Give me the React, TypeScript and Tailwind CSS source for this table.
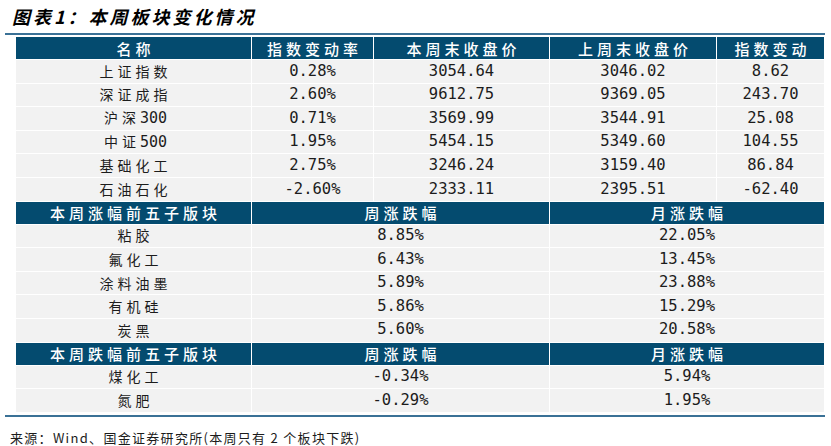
import React from 'react';

const cjk = '[font-family:"Noto_Sans_CJK_SC",sans-serif]';
const mono = '[font-family:"DejaVu_Sans_Mono","Noto_Sans_CJK_SC",monospace]';

type Cell = string;

const indexRows: Cell[][] = [
  ['上证指数', '0.28%', '3054.64', '3046.02', '8.62'],
  ['深证成指', '2.60%', '9612.75', '9369.05', '243.70'],
  ['沪深|300', '0.71%', '3569.99', '3544.91', '25.08'],
  ['中证|500', '1.95%', '5454.15', '5349.60', '104.55'],
  ['基础化工', '2.75%', '3246.24', '3159.40', '86.84'],
  ['石油石化', '-2.60%', '2333.11', '2395.51', '-62.40'],
];

const topRows: Cell[][] = [
  ['粘胶', '8.85%', '22.05%'],
  ['氟化工', '6.43%', '13.45%'],
  ['涂料油墨', '5.89%', '23.88%'],
  ['有机硅', '5.86%', '15.29%'],
  ['炭黑', '5.60%', '20.58%'],
];

const bottomRows: Cell[][] = [
  ['煤化工', '-0.34%', '5.94%'],
  ['氮肥', '-0.29%', '1.95%'],
];

const cols5 = 'grid-cols-[235px_121px_175px_166px_107px]';
const cols3 = 'grid-cols-[235px_297px_274px]';

const HeadCell: React.FC<{ text: string }> = ({ text }) => (
  <div className="bg-[#044b6f] text-white flex items-center justify-center h-[22px]">
    <span className={`${cjk} text-[15px] font-medium tracking-[4px] pl-[4px] leading-none`}>{text}</span>
  </div>
);

const NameText: React.FC<{ text: string }> = ({ text }) => {
  const [zh, num] = text.split('|');
  return (
    <span className="leading-none text-[14px]">
      <span className={`${cjk} tracking-[4px] pl-[4px]`}>{zh}</span>
      {num && <span className={`${mono} text-[15px]`}>{num}</span>}
    </span>
  );
};

const DataCell: React.FC<{ text: string; name?: boolean }> = ({ text, name }) => (
  <div className="bg-[#f2f2f2] text-[#1c1c1c] flex items-center justify-center h-[22.6px]">
    {name ? <NameText text={text} /> : <span className={`${mono} text-[15.5px] leading-none`}>{text}</span>}
  </div>
);

const Section: React.FC<{ cols: string; head: string[]; rows: Cell[][] }> = ({ cols, head, rows }) => (
  <div className={`grid ${cols} gap-px`}>
    {head.map((h) => (
      <HeadCell key={h} text={h} />
    ))}
    {rows.map((r) => r.map((c, i) => <DataCell key={r[0] + i} text={c} name={i === 0} />))}
  </div>
);

const App: React.FC = () => {
  return (
    <div className="w-[831px] h-[446px] bg-white relative overflow-hidden">
      <div className="pl-[12px] pt-[3px] h-[33px]">
        <h1 className={`${cjk} text-[18px] font-bold italic tracking-[3px] text-black leading-[26px]`}>
          图表1：本周板块变化情况
        </h1>
      </div>
      <div className="ml-[5px] w-[820px] h-[2px] bg-[#3a7196]" />
      <div className="ml-[16px] w-[808px] mt-[2px] bg-white flex flex-col gap-px">
        <Section cols={cols5} head={['名称', '指数变动率', '本周末收盘价', '上周末收盘价', '指数变动']} rows={indexRows} />
        <Section cols={cols3} head={['本周涨幅前五子版块', '周涨跌幅', '月涨跌幅']} rows={topRows} />
        <Section cols={cols3} head={['本周跌幅前五子版块', '周涨跌幅', '月涨跌幅']} rows={bottomRows} />
      </div>
      <div className="ml-[5px] w-[820px] h-[2px] bg-[#3a7196] mt-[3px]" />
      <div className={`${cjk} pl-[10px] mt-[14px] text-[13px] tracking-[1.3px] text-[#1c1c1c] leading-none`}>
        来源：Wind、国金证券研究所(本周只有 2 个板块下跌)
      </div>
    </div>
  );
};

export default App;
